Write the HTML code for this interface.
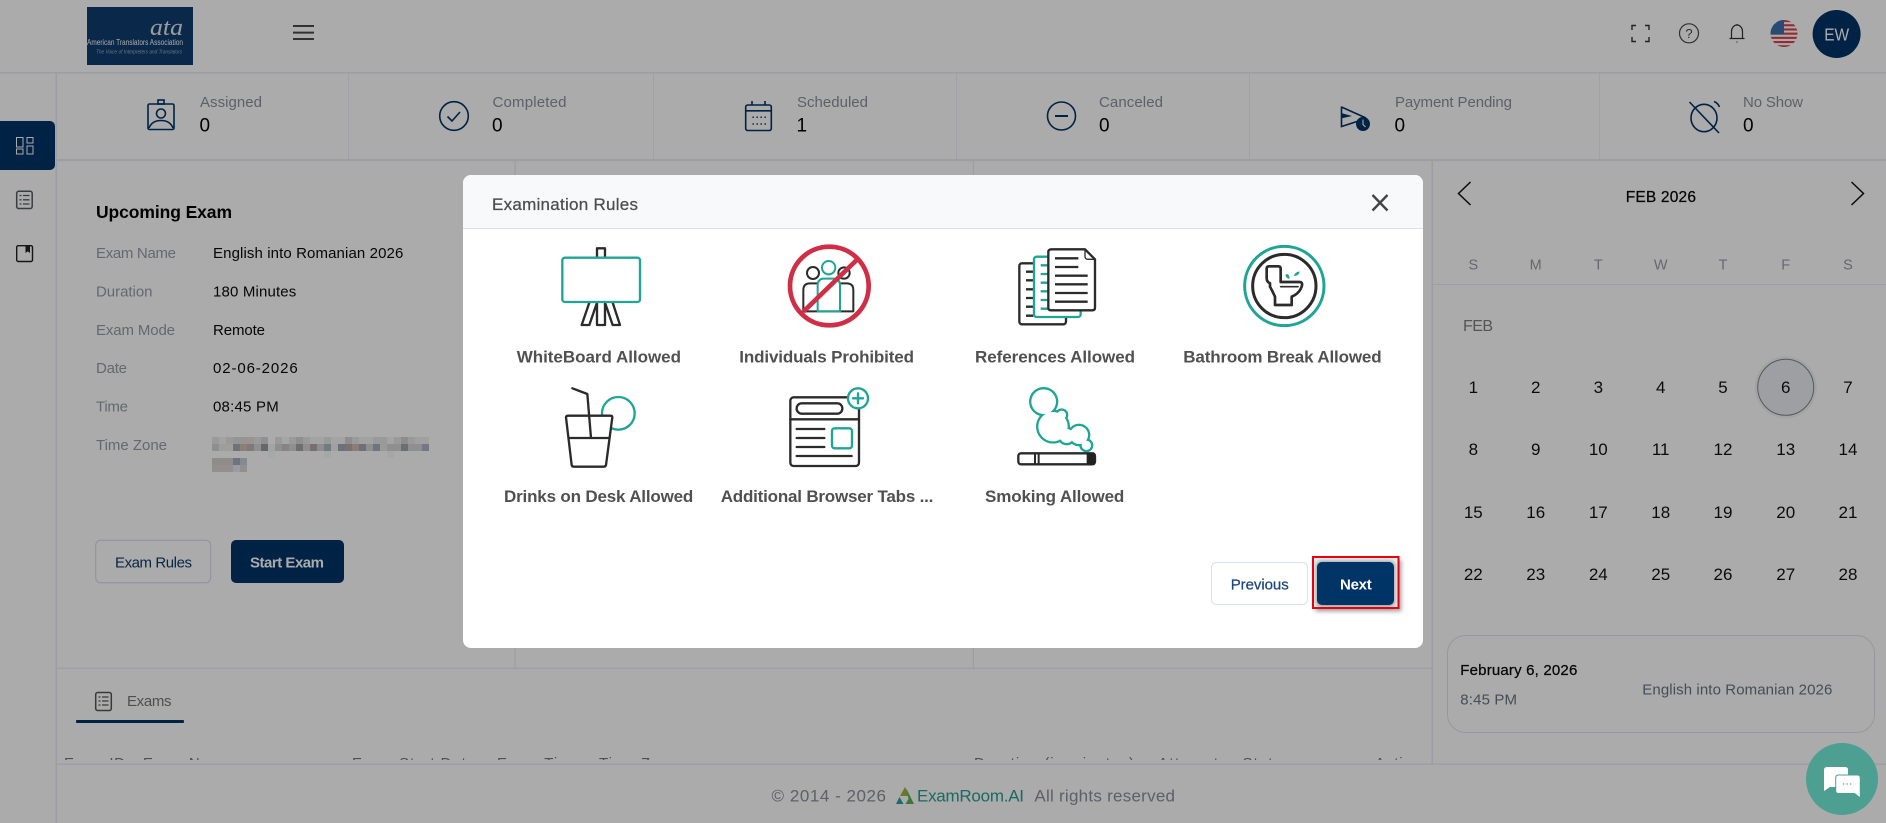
<!DOCTYPE html>
<html lang="en">
<head>
<meta charset="utf-8">
<title>Examination Rules</title>
<style>
html,body{margin:0;padding:0;width:1886px;height:823px;overflow:hidden;background:#fff}
svg{position:absolute;left:0;top:0;display:block}
#dim{position:absolute;left:0;top:0;width:1886px;height:823px;background:rgba(0,0,0,.33)}
text{font-family:"Liberation Sans",sans-serif;font-size:15px}
.m{stroke:currentColor;stroke-width:.25px}
.lab{fill:#989ba6;color:#989ba6}
.val{fill:#0a0a0a;color:#0a0a0a}
.st{fill:#8b8f9b;color:#8b8f9b}
.n{fill:none;stroke:#003366;stroke-width:1.6}
.day{font-size:17px;fill:#111;text-anchor:middle}
.wk{font-size:14.5px;fill:#989ba6;text-anchor:middle}
.rule{font-size:17px;font-weight:bold;fill:#505050}
.tl{fill:none;stroke:#2b2b2b;stroke-width:7;stroke-linecap:round;stroke-linejoin:round}
.te{fill:none;stroke:#1fa595;stroke-width:7;stroke-linecap:round;stroke-linejoin:round}
</style>
</head>
<body>
<svg width="1886" height="823" viewBox="0 0 1886 823">
  <defs>
    <clipPath id="flag"><circle cx="1784" cy="33.5" r="13.5"/></clipPath>
    <clipPath id="peek"><rect x="56" y="640" width="1376" height="120"/></clipPath>
  </defs>
  <!-- structural lines -->
  <g fill="#e9ebf6">
    <rect x="0" y="72" width="1886" height="1.5"/>
    <rect x="55.5" y="73" width="1.5" height="750"/>
    <rect x="57" y="159" width="1829" height="2.2"/>
    <rect x="514.5" y="160" width="1.2" height="508"/>
    <rect x="972.8" y="160" width="1.2" height="508"/>
    <rect x="1431.5" y="160" width="1.5" height="604"/>
    <rect x="57" y="667.7" width="1375" height="1.2"/>
    <rect x="57" y="763.5" width="1829" height="1.3"/>
    <rect x="1433" y="284" width="453" height="1"/>
  </g>
  <g fill="#eef0f8">
    <rect x="348" y="73" width="1" height="86"/>
    <rect x="653" y="73" width="1" height="86"/>
    <rect x="956" y="73" width="1" height="86"/>
    <rect x="1249" y="73" width="1" height="86"/>
    <rect x="1599" y="73" width="1" height="86"/>
  </g>

  <!-- logo -->
  <rect x="87" y="7" width="106" height="58" fill="#0f3c6e"/>
  <text x="150" y="35" style="font-family:'Liberation Serif',serif;font-style:italic;font-size:24px;fill:#e8e8e8" textLength="33" lengthAdjust="spacingAndGlyphs">ata</text>
  <text x="87" y="45" style="font-size:8px;fill:#fff" textLength="96" lengthAdjust="spacingAndGlyphs">American Translators Association</text>
  <text x="96" y="53.5" style="font-size:5.2px;font-style:italic;fill:#9fb0c4" textLength="86" lengthAdjust="spacingAndGlyphs">The Voice of Interpreters and Translators</text>

  <!-- header icons -->
  <path d="M293 26H314M293 32.6H314M293 39H314" stroke="#4a4a4a" stroke-width="2" fill="none"/>
  <path d="M1632 30V25.5H1636M1645 25.5H1649V30M1632 37V41.5H1636M1645 41.5H1649V37" stroke="#333" stroke-width="1.4" fill="none"/>
  <circle cx="1689" cy="33.3" r="9.5" fill="none" stroke="#4a4a4a" stroke-width="1.2"/>
  <text x="1689" y="38" style="font-size:13px;fill:#4a4a4a;text-anchor:middle">?</text>
  <path d="M1731.5 38.5V31.5a5.5 6.5 0 0 1 11 0V38.5ZM1729.5 38.5H1744.5M1737 25V24M1737 41.5V42.5" fill="none" stroke="#333" stroke-width="1.2"/>
  <g clip-path="url(#flag)">
    <rect x="1770" y="20" width="28" height="28" fill="#fff"/>
    <g fill="#d8434b">
      <rect x="1770" y="20" width="28" height="2.1"/><rect x="1770" y="24.2" width="28" height="2.1"/><rect x="1770" y="28.4" width="28" height="2.1"/><rect x="1770" y="32.6" width="28" height="2.1"/><rect x="1770" y="36.8" width="28" height="2.1"/><rect x="1770" y="41" width="28" height="2.1"/><rect x="1770" y="45.2" width="28" height="2.1"/>
    </g>
    <rect x="1770" y="20" width="14" height="14.5" fill="#3d6fb0"/>
  </g>
  <circle cx="1836.6" cy="34" r="24" fill="#003366"/>
  <text x="1824.2" y="40.5" style="font-size:17.5px;fill:#fff" textLength="25" lengthAdjust="spacingAndGlyphs">EW</text>

  <!-- sidebar -->
  <path d="M0 121H50a5 5 0 0 1 5 5V165a5 5 0 0 1-5 5H0Z" fill="#003366"/>
  <g fill="none" stroke="#fff" stroke-width="1">
    <rect x="16.5" y="137.5" width="6.5" height="9.5"/><rect x="27" y="137.5" width="6" height="5.5"/>
    <rect x="16.5" y="149" width="6.5" height="5"/><rect x="27" y="146" width="6" height="8"/>
  </g>
  <rect x="16.7" y="191.3" width="15.5" height="17.2" rx="2" fill="none" stroke="#555a62" stroke-width="1.5"/>
  <path d="M19.5 195.5h2M23 195.5h6.5M19.5 199.8h2M23 199.8h6.5M19.5 204h2M23 204h6.5" stroke="#555a62" stroke-width="1.3" fill="none"/>
  <rect x="16.7" y="245.7" width="15.8" height="15.8" rx="1.5" fill="none" stroke="#222" stroke-width="1.4"/>
  <path d="M25.5 245.5h4.5v7.5l-2.2-1.6-2.3 1.6Z" fill="#222"/>

  <!-- stats -->
  <g class="n">
    <rect x="148" y="104" width="26" height="25.5" rx="1.5"/>
    <rect x="158" y="100" width="6" height="4"/>
    <circle cx="161" cy="113.5" r="4.5"/>
    <path d="M149 128Q152 120.5 161 120.5Q170 120.5 173 128"/>
    <circle cx="454" cy="116" r="14.3"/>
    <path d="M447.5 116.5l4.5 4.5 8-9"/>
    <rect x="745.7" y="105" width="25.6" height="25.5" rx="2"/>
    <path d="M752 101v4M765 101v4M746 110.8H771"/>
    <circle cx="1061.5" cy="116" r="14"/>
    <path d="M1055 116H1068" stroke-width="2"/>
    <path d="M1341.5 107L1366 118M1341.5 106.5V126.5L1357 121.5"/>
    <ellipse cx="1704" cy="118" rx="13" ry="13.7"/>
    <path d="M1689.5 102L1719 133M1714 101.5Q1718 103 1719.5 107"/>
  </g>
  <path d="M752.5 117.3h1.4M756.5 117.3h1.4M760.5 117.3h1.4M764.5 117.3h1.4M752.5 124h1.4M756.5 124h1.4M760.5 124h1.4M764.5 124h1.4" stroke="#003366" stroke-width="1.5"/>
  <path d="M1341 113L1352 116L1341 118.5Z" fill="#003366"/>
  <circle cx="1363" cy="124" r="7" fill="#003366"/>
  <path d="M1363 119.5V124.5L1365.5 127" stroke="#fff" stroke-width="1.1" fill="none"/>
  <g class="st">
    <text x="200" y="107" textLength="62">Assigned</text>
    <text x="492.5" y="107" textLength="74">Completed</text>
    <text x="797" y="107" textLength="71">Scheduled</text>
    <text x="1099" y="107" textLength="64">Canceled</text>
    <text x="1395" y="107" textLength="117">Payment Pending</text>
    <text x="1743" y="107" textLength="60">No Show</text>
  </g>
  <g style="fill:#000">
    <text x="199.5" y="131.5" style="font-size:19px">0</text>
    <text x="492" y="131.5" style="font-size:19px">0</text>
    <text x="796.5" y="131.5" style="font-size:19px">1</text>
    <text x="1099" y="131.5" style="font-size:19px">0</text>
    <text x="1394.5" y="131.5" style="font-size:19px">0</text>
    <text x="1743" y="131.5" style="font-size:19px">0</text>
  </g>

  <!-- upcoming exam -->
  <text x="96" y="218" style="font-size:17.5px;font-weight:bold;fill:#000" textLength="136">Upcoming Exam</text>
  <g class="lab">
    <text x="96" y="258" textLength="80">Exam Name</text>
    <text x="96" y="296.3" textLength="56.5">Duration</text>
    <text x="96" y="335" textLength="79">Exam Mode</text>
    <text x="96" y="373" textLength="31">Date</text>
    <text x="96" y="411.3" textLength="32">Time</text>
    <text x="96" y="450" textLength="71">Time Zone</text>
  </g>
  <g class="val">
    <text x="213" y="258" textLength="190.3">English into Romanian 2026</text>
    <text x="213" y="296.3" textLength="83.3">180 Minutes</text>
    <text x="213" y="335" textLength="52">Remote</text>
    <text x="213" y="373" textLength="84.7">02-06-2026</text>
    <text x="213" y="411.3" textLength="65.7">08:45 PM</text>
  </g>
  <rect x="95.7" y="540.2" width="115" height="42.6" rx="5" fill="none" stroke="#d8dae8" stroke-width="1"/>
  <text x="115" y="567.3" style="fill:#0d3a6a" textLength="77">Exam Rules</text>
  <rect x="231" y="540" width="113" height="43" rx="5" fill="#003366"/>
  <text x="250" y="567.3" style="fill:#fff;font-weight:bold;font-size:15px" textLength="74">Start Exam</text>

  <!-- tabs / table -->
  <rect x="95.7" y="692.5" width="15.6" height="18" rx="2" fill="none" stroke="#555" stroke-width="1.5"/>
  <path d="M98.5 697h2M102 697h6.5M98.5 701h2M102 701h6.5M98.5 705h2M102 705h6.5" stroke="#555" stroke-width="1.3" fill="none"/>
  <text x="127" y="706" style="fill:#777" textLength="44.5">Exams</text>
  <rect x="76" y="720" width="108" height="3" rx="1" fill="#003366"/>
  <g clip-path="url(#peek)" style="fill:#777">
    <text x="64" y="768" textLength="61">Exam ID</text>
    <text x="143" y="768" textLength="88">Exam Name</text>
    <text x="352" y="768" textLength="123">Exam Start Date</text>
    <text x="497" y="768" textLength="83">Exam Time</text>
    <text x="599" y="768" textLength="79">Time Zone</text>
    <text x="974" y="768" textLength="160">Duration (in minutes)</text>
    <text x="1158" y="768" textLength="69">Attempts</text>
    <text x="1242.5" y="768" textLength="48">Status</text>
    <text x="1375" y="768" textLength="46">Action</text>
  </g>

  <!-- footer -->
  <g style="fill:#8c8f99">
    <text x="771.5" y="801.7" style="font-size:17px" textLength="114.5">© 2014 - 2026</text>
    <text x="1034.4" y="801.7" style="font-size:17px" textLength="140.6">All rights reserved</text>
  </g>
  <path d="M905 787L910 796H900Z" fill="#9bb63f"/>
  <path d="M899.5 797L896 804H903.5Z" fill="#2a9db0"/>
  <path d="M906.5 789L914 804H905.5L908.5 799Z" fill="#5fae5a"/>
  <text x="917" y="801.7" style="font-size:17px;fill:#25a08f" textLength="107">ExamRoom.AI</text>

  <!-- calendar -->
  <path d="M1470.5 182L1458.5 193.5L1470.5 205M1851.5 182L1863.5 193.5L1851.5 205" fill="none" stroke="#111" stroke-width="1.5"/>
  <text x="1625.7" y="202" class="val m" style="font-size:15.5px" textLength="70.3">FEB 2026</text>
  <text class="wk" x="1473.3" y="269.5">S</text><text class="wk" x="1535.7" y="269.5">M</text><text class="wk" x="1598.3" y="269.5">T</text><text class="wk" x="1660.7" y="269.5">W</text><text class="wk" x="1723" y="269.5">T</text><text class="wk" x="1785.7" y="269.5">F</text><text class="wk" x="1848" y="269.5">S</text>
  <text x="1463" y="331" style="font-size:16px;fill:#807f80" textLength="30">FEB</text>
  <circle cx="1785.7" cy="387.3" r="31" fill="#f0f3f7"/>
  <circle cx="1785.7" cy="387.3" r="28" fill="#eaeef3" stroke="#858585" stroke-width="1"/>
  <text class="day" x="1473.3" y="393">1</text><text class="day" x="1535.7" y="393">2</text><text class="day" x="1598.3" y="393">3</text><text class="day" x="1660.7" y="393">4</text><text class="day" x="1723" y="393">5</text><text class="day" x="1785.7" y="393">6</text><text class="day" x="1848" y="393">7</text>
  <text class="day" x="1473.3" y="455">8</text><text class="day" x="1535.7" y="455">9</text><text class="day" x="1598.3" y="455">10</text><text class="day" x="1660.7" y="455">11</text><text class="day" x="1723" y="455">12</text><text class="day" x="1785.7" y="455">13</text><text class="day" x="1848" y="455">14</text>
  <text class="day" x="1473.3" y="518">15</text><text class="day" x="1535.7" y="518">16</text><text class="day" x="1598.3" y="518">17</text><text class="day" x="1660.7" y="518">18</text><text class="day" x="1723" y="518">19</text><text class="day" x="1785.7" y="518">20</text><text class="day" x="1848" y="518">21</text>
  <text class="day" x="1473.3" y="580">22</text><text class="day" x="1535.7" y="580">23</text><text class="day" x="1598.3" y="580">24</text><text class="day" x="1660.7" y="580">25</text><text class="day" x="1723" y="580">26</text><text class="day" x="1785.7" y="580">27</text><text class="day" x="1848" y="580">28</text>
  <rect x="1447.5" y="635.5" width="427" height="97" rx="18" fill="none" stroke="#e0e2ea" stroke-width="1"/>
  <text x="1460.3" y="675" class="val m" textLength="117">February 6, 2026</text>
  <text x="1460.3" y="704.3" style="fill:#6b7280" textLength="56.7">8:45 PM</text>
  <text x="1642.3" y="694.3" style="fill:#6b7280" textLength="190">English into Romanian 2026</text>
</svg>

<div id="dim"></div>

<svg width="1886" height="823" viewBox="0 0 1886 823">
  <defs>
    <filter id="b2" x="-20%" y="-20%" width="140%" height="140%"><feGaussianBlur stdDeviation="2"/></filter>
  </defs>
  <!-- redacted time zone -->
  <g>
    <rect x="212" y="437" width="217" height="7" fill="#9a9a9a"/>
    <rect x="219" y="437" width="7" height="7" fill="#a3a3a3"/><rect x="233" y="437" width="7" height="7" fill="#959595"/><rect x="240" y="437" width="14" height="7" fill="#999391"/><rect x="261" y="437" width="7" height="7" fill="#909090"/><rect x="268" y="437" width="7" height="7" fill="#ababab"/><rect x="282" y="437" width="7" height="7" fill="#a6a6a6"/><rect x="296" y="437" width="7" height="7" fill="#8f8f8f"/><rect x="310" y="437" width="14" height="7" fill="#a3a3a3"/><rect x="331" y="437" width="14" height="7" fill="#a4a4a4"/><rect x="345" y="437" width="7" height="7" fill="#8e8e8e"/><rect x="359" y="437" width="14" height="7" fill="#a2a2a2"/><rect x="387" y="437" width="7" height="7" fill="#a4a4a4"/><rect x="401" y="437" width="7" height="7" fill="#8d8d8d"/><rect x="415" y="437" width="14" height="7" fill="#a0a0a0"/>
    <rect x="212" y="444" width="217" height="7" fill="#8f8f8f"/>
    <rect x="219" y="444" width="14" height="7" fill="#a09e9a"/><rect x="233" y="444" width="7" height="7" fill="#6f7278"/><rect x="240" y="444" width="7" height="7" fill="#8a8078"/><rect x="247" y="444" width="7" height="7" fill="#82787a"/><rect x="254" y="444" width="7" height="7" fill="#8f8f8f"/><rect x="261" y="444" width="7" height="7" fill="#65676c"/><rect x="268" y="444" width="7" height="7" fill="#9ea6a6"/><rect x="282" y="444" width="7" height="7" fill="#858585"/><rect x="296" y="444" width="7" height="7" fill="#6e6e70"/><rect x="310" y="444" width="7" height="7" fill="#78706e"/><rect x="317" y="444" width="7" height="7" fill="#8e8e90"/><rect x="324" y="444" width="7" height="7" fill="#737a84"/><rect x="331" y="444" width="7" height="7" fill="#a0a0a0"/><rect x="338" y="444" width="7" height="7" fill="#6d7078"/><rect x="345" y="444" width="7" height="7" fill="#7a716c"/><rect x="352" y="444" width="7" height="7" fill="#8a7f78"/><rect x="359" y="444" width="7" height="7" fill="#6f7076"/><rect x="373" y="444" width="7" height="7" fill="#70747c"/><rect x="380" y="444" width="7" height="7" fill="#9a9a9a"/><rect x="401" y="444" width="7" height="7" fill="#6a6e76"/><rect x="422" y="444" width="7" height="7" fill="#747880"/>
    <rect x="268" y="451" width="7" height="7" fill="#a6a9a9"/><rect x="324" y="451" width="7" height="7" fill="#a6a6a6"/><rect x="387" y="451" width="7" height="7" fill="#a6a6a6"/>
    <rect x="212" y="458" width="35" height="7" fill="#8f8c8c"/><rect x="233" y="458" width="7" height="7" fill="#6f7280"/><rect x="240" y="458" width="7" height="7" fill="#858a90"/>
    <rect x="212" y="465" width="35" height="7" fill="#938f8e"/><rect x="233" y="465" width="7" height="7" fill="#9a9ca4"/>
  </g>

  <!-- modal -->
  <rect x="463" y="175" width="960" height="473" rx="8" fill="#fff"/>
  <path d="M463 228V183a8 8 0 0 1 8-8H1415a8 8 0 0 1 8 8V228Z" fill="#f8f9fb"/>
  <rect x="463" y="228" width="960" height="1" fill="#dcdeec"/>
  <text x="492" y="210" class="m" style="font-size:17px;fill:#4d4d4d;color:#4d4d4d" textLength="146">Examination Rules</text>
  <path d="M1372.5 195L1387.5 210.5M1387.5 195L1372.5 210.5" stroke="#444" stroke-width="2.4" fill="none"/>

  <!-- whiteboard + individuals (x3 coordinates) -->
  <g transform="translate(470 170) scale(.33333)">
    <rect x="381" y="235" width="24" height="30" class="tl"/>
    <path class="tl" d="M358 398L335 465H358L381 398M381 398V465H405V398M428 398L450 465H428L405 398"/>
    <rect x="277" y="263" width="233" height="133" rx="8" class="te" style="fill:#fff"/>

    <circle cx="1029" cy="309" r="18" class="tl" style="stroke-width:6"/>
    <circle cx="1122" cy="309" r="17" class="tl" style="stroke-width:6"/>
    <path class="tl" style="stroke-width:6" d="M1000 424V360Q1000 340 1020 340H1043M1112 340H1130Q1150 340 1150 360V424H1000"/>
    <circle cx="1076" cy="293" r="20" class="te" style="stroke-width:6"/>
    <path class="te" style="stroke-width:6" d="M1043 424V345Q1043 328 1060 326H1092Q1110 328 1110 345V424Z"/>
    <path d="M1000 425L1160 270" stroke="#d02e46" stroke-width="14" fill="none"/>
    <circle cx="1078" cy="348" r="118" fill="none" stroke="#d02e46" stroke-width="14"/>
  </g>

  <!-- references + bathroom -->
  <g transform="translate(950 170) scale(.33333)">
    <rect x="208" y="280" width="140" height="183" rx="8" class="tl" style="fill:#fff"/>
    <path class="tl" d="M228 305H250M228 331H250M228 358H250M228 384H250M228 410H250M228 437H250" style="stroke-linecap:butt"/>
    <rect x="252" y="260" width="140" height="181" rx="8" class="te" style="fill:#fff"/>
    <path class="te" d="M272 286H295M272 312H295M272 338H295M272 364H295M272 390H295M272 416H295" style="stroke-linecap:butt"/>
    <path class="tl" style="fill:#fff" d="M305 238H405L435 268V413Q435 421 427 421H303Q295 421 295 413V246Q295 238 305 238Z"/>
    <path class="tl" style="stroke-width:4" d="M405 240V260Q405 268 415 268H435"/>
    <path class="tl" d="M315 265H385M315 291H385M315 317H413M315 343H413M315 369H413M315 395H413" style="stroke-linecap:butt"/>

    <circle cx="1003" cy="348" r="119" class="te" style="stroke-width:9"/>
    <circle cx="1003" cy="348" r="95" class="tl" style="stroke-width:9"/>
    <path class="tl" style="stroke-width:8" d="M950 296Q950 289 957 289H985Q992 289 992 296V336H1048Q1058 336 1056 346Q1050 370 1025 380V405H975V380Q968 365 960 350V340Q950 335 950 325Z"/>
    <path class="tl" style="stroke-width:5" d="M992 350H1044"/>
    <path d="M1012 312Q1020 316 1018 327Q1007 324 1006 314ZM1049 304Q1048 317 1032 318Q1033 307 1049 304Z" fill="#1fa595"/>
  </g>

  <!-- drinks + browser -->
  <g transform="translate(470 370) scale(.33333)">
    <circle cx="445" cy="130" r="49" class="te"/>
    <path class="tl" style="fill:#fff" d="M288 142Q288 137 295 137H420Q428 137 427 142L408 285Q407 290 400 290H312Q306 290 305 285Z"/>
    <path class="tl" d="M297 204H418M307 55L352 72L363 204"/>

    <rect x="961" y="82" width="206" height="206" rx="10" class="tl"/>
    <rect x="980" y="100" width="137" height="31" rx="15" class="tl"/>
    <path class="tl" d="M961 148H1167M980 177H1063M980 204H1063M980 231H1063M980 258H1145"/>
    <rect x="1086" y="175" width="60" height="60" rx="8" class="te"/>
    <circle cx="1164" cy="85" r="30" class="te" style="fill:#fff"/>
    <path class="te" d="M1164 70V100M1149 85H1179"/>
  </g>

  <!-- smoking -->
  <g transform="translate(950 370) scale(.33333)">
    <g fill="#1fa595">
      <circle cx="281" cy="95" r="44"/><circle cx="309" cy="170" r="51"/><circle cx="387" cy="195" r="34"/><circle cx="409" cy="226" r="21"/><circle cx="335" cy="135" r="20"/><circle cx="350" cy="198" r="28"/>
    </g>
    <g fill="#fff">
      <circle cx="281" cy="95" r="37"/><circle cx="309" cy="170" r="44"/><circle cx="387" cy="195" r="27"/><circle cx="409" cy="226" r="14"/><circle cx="335" cy="135" r="13"/><circle cx="350" cy="198" r="21"/>
    </g>
    <rect x="205" y="250" width="230" height="33" rx="8" class="tl" style="fill:#fff"/>
    <rect x="410" y="248" width="26" height="37" rx="6" fill="#222"/>
    <path d="M255 250V283M266 250V283" stroke="#2b2b2b" stroke-width="6"/>
  </g>

  <!-- rule labels -->
  <text class="rule" x="516.7" y="362.7" textLength="164.3">WhiteBoard Allowed</text>
  <text class="rule" x="739.3" y="362.7" textLength="174.7">Individuals Prohibited</text>
  <text class="rule" x="975" y="362.7" textLength="160">References Allowed</text>
  <text class="rule" x="1183.3" y="362.7" textLength="198.3">Bathroom Break Allowed</text>
  <text class="rule" x="504" y="502" textLength="189.3">Drinks on Desk Allowed</text>
  <text class="rule" x="720.7" y="502" textLength="212.7">Additional Browser Tabs ...</text>
  <text class="rule" x="985" y="502" textLength="139.3">Smoking Allowed</text>

  <!-- buttons -->
  <rect x="1211.5" y="562.5" width="96" height="42" rx="5" fill="#fff" stroke="#dcdfec" stroke-width="1"/>
  <text x="1230.7" y="589.3" class="m" style="fill:#1c477c;color:#1c477c" textLength="58">Previous</text>
  <rect x="1315.5" y="559.5" width="86" height="52" fill="#000" opacity=".35" filter="url(#b2)"/>
  <rect x="1313" y="557" width="85.5" height="51" fill="#eceef0"/>
  <rect x="1316" y="561" width="79" height="46" rx="5" fill="#000" opacity=".35" filter="url(#b2)"/>
  <rect x="1317" y="562" width="77" height="43" rx="5" fill="#003366"/>
  <rect x="1313" y="557" width="85.5" height="51" fill="none" stroke="#e8000f" stroke-width="2"/>
  <text x="1340" y="589.3" style="fill:#fff;font-weight:bold;font-size:15px" textLength="31.7">Next</text>

  <!-- chat -->
  <circle cx="1842" cy="779" r="36" fill="#4c9f91"/>
  <path d="M1827 767H1845.5Q1848 767 1848 770V784Q1848 787 1845 787H1830L1824 791V770Q1824 767 1827 767Z" fill="#fff"/>
  <path d="M1838.5 775H1857.5Q1860.3 775 1860.3 778V798L1854.5 793.5H1838.5Q1835.7 793.5 1835.7 790.5V778Q1835.7 775 1838.5 775Z" fill="#fff" stroke="#4c9f91" stroke-width="1"/>
  <path d="M1843 784h1.3M1846.5 784h1.3M1850 784h1.3" stroke="#4c9f91" stroke-width="1.3"/>
</svg>
</body>
</html>
